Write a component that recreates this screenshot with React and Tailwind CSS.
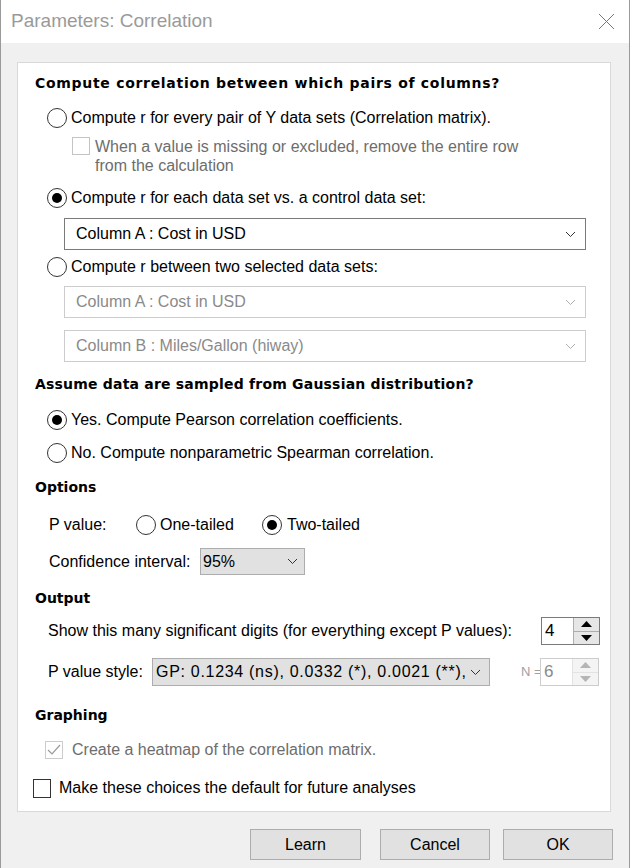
import React from 'react';

const Radio = ({ checked }) => (
  <span className="w-[20px] h-[20px] rounded-full border border-[#333] bg-white flex items-center justify-center shrink-0">
    {checked && <span className="w-[10px] h-[10px] rounded-full bg-[#000]" />}
  </span>
);

const Chevron = ({ color = '#333' }) => (
  <svg width="11" height="7" viewBox="0 0 11 7" className="shrink-0">
    <polyline points="1,1 5.5,5.5 10,1" fill="none" stroke={color} strokeWidth="1" />
  </svg>
);

const Tick = () => (
  <svg width="14" height="12" viewBox="0 0 14 12">
    <polyline points="1,6 5,10 13,1" fill="none" stroke="#9a9a9a" strokeWidth="1.2" />
  </svg>
);

const Triangle = ({ up, color }) => (
  <svg width="11" height="6" viewBox="0 0 11 6">
    <polygon points={up ? '0,6 11,6 5.5,0' : '0,0 11,0 5.5,6'} fill={color} />
  </svg>
);

const Spinner = ({ value, disabled }) => (
  <div
    className={`flex h-[28px] w-[59px] border ${disabled ? 'border-[#cccccc]' : 'border-[#7a7a7a]'} bg-white shrink-0`}
  >
    <div className={`flex-1 flex items-center pl-[3px] text-[17px] ${disabled ? 'text-[#8a8a8a]' : 'text-black'}`}>
      {value}
    </div>
    <div className={`w-[26px] flex flex-col border-l ${disabled ? 'border-[#e3e3e3]' : 'border-[#adadad]'}`}>
      <div className={`flex-1 flex items-center justify-center border-b ${disabled ? 'bg-[#f4f4f4] border-[#e3e3e3]' : 'bg-[#e6e6e6] border-[#adadad]'}`}>
        <Triangle up color={disabled ? '#b5b5b5' : '#000'} />
      </div>
      <div className={`flex-1 flex items-center justify-center ${disabled ? 'bg-[#f4f4f4]' : 'bg-[#e6e6e6]'}`}>
        <Triangle color={disabled ? '#b5b5b5' : '#000'} />
      </div>
    </div>
  </div>
);

const Heading = ({ children, className = '' }) => (
  <div
    className={`h-[24px] flex items-center pl-[17px] font-bold text-[14px] text-black whitespace-nowrap ${className}`}
    style={{ fontFamily: '"DejaVu Sans", Verdana, sans-serif' }}
  >
    {children}
  </div>
);

const RadioRow = ({ checked, children, className = '' }) => (
  <div className={`h-[24px] flex items-center pl-[29px] gap-[4px] ${className}`}>
    <Radio checked={checked} />
    <span>{children}</span>
  </div>
);

const Select = ({ children, disabled, className = '' }) => (
  <div
    className={`ml-[46px] w-[522px] h-[32px] flex items-center justify-between pl-[11px] pr-[9px] border bg-white ${
      disabled ? 'border-[#cccccc] text-[#8a8a8a]' : 'border-[#7a7a7a] text-black'
    } ${className}`}
  >
    <span>{children}</span>
    <Chevron color={disabled ? '#b0b0b0' : '#333'} />
  </div>
);

export default function App() {
  return (
    <div
      className="w-[630px] h-[868px] bg-[#f0f0f0] border-x border-[#9a9a9a] flex flex-col text-black text-[16px]"
      style={{ fontFamily: '"Liberation Sans", Arial, sans-serif' }}
    >
      {/* title bar */}
      <div className="h-[43px] bg-white flex items-center justify-between pl-[10px] pr-[14px] shrink-0">
        <span className="text-[19px] text-[#9a9a9a]">Parameters: Correlation</span>
        <svg width="17" height="17" viewBox="0 0 17 17">
          <path d="M1 1 L16 16 M16 1 L1 16" stroke="#777" strokeWidth="1" />
        </svg>
      </div>

      {/* main panel */}
      <div className="ml-[16px] mt-[19px] w-[594px] h-[750px] bg-white border border-[#d9d9d9] flex flex-col shrink-0">
        <Heading className="mt-[8px] tracking-[0.7px]">Compute correlation between which pairs of columns?</Heading>
        <RadioRow className="mt-[11px]">Compute r for every pair of Y data sets (Correlation matrix).</RadioRow>

        <div className="mt-[6px] pl-[54px] flex gap-[5px] text-[#6d6d6d]">
          <span className="mt-[1px] w-[18px] h-[18px] border border-[#c4c4c4] bg-white shrink-0" />
          <span className="leading-[19px] mt-[1px]">
            When a value is missing or excluded, remove the entire row
            <br />
            from the calculation
          </span>
        </div>

        <RadioRow checked className="mt-[11px]">Compute r for each data set vs. a control data set:</RadioRow>
        <Select className="mt-[8px]">Column A : Cost in USD</Select>
        <RadioRow className="mt-[5px]">Compute r between two selected data sets:</RadioRow>
        <Select disabled className="mt-[7px]">Column A : Cost in USD</Select>
        <Select disabled className="mt-[12px]">Column B : Miles/Gallon (hiway)</Select>

        <Heading className="mt-[10px] tracking-[0.2px]">Assume data are sampled from Gaussian distribution?</Heading>
        <RadioRow checked className="mt-[12px]">Yes. Compute Pearson correlation coefficients.</RadioRow>
        <RadioRow className="mt-[9px]">No. Compute nonparametric Spearman correlation.</RadioRow>

        <Heading className="mt-[10px]">Options</Heading>
        <div className="mt-[14px] h-[24px] flex items-center pl-[31px]">
          <span className="w-[87px]">P value:</span>
          <Radio />
          <span className="ml-[4px] w-[102px]">One-tailed</span>
          <Radio checked />
          <span className="ml-[5px]">Two-tailed</span>
        </div>
        <div className="mt-[11px] h-[27px] flex items-center pl-[31px]">
          <span className="w-[151px]">Confidence interval:</span>
          <div className="w-[105px] h-[27px] bg-[#e1e1e1] border border-[#adadad] flex items-center justify-between pl-[2px] pr-[6px]">
            <span>95%</span>
            <Chevron />
          </div>
        </div>

        <Heading className="mt-[11px]">Output</Heading>
        <div className="mt-[7px] h-[28px] flex items-center justify-between pl-[30px] pr-[10px]">
          <span>Show this many significant digits (for everything except P values):</span>
          <Spinner value="4" />
        </div>
        <div className="mt-[13px] h-[28px] flex items-center pl-[30px]">
          <span className="w-[104px]">P value style:</span>
          <div className="w-[338px] h-[28px] bg-[#e1e1e1] border border-[#adadad] flex items-center justify-between pl-[3px] pr-[8px]">
            <span className="tracking-[0.7px] whitespace-nowrap">GP: 0.1234 (ns), 0.0332 (*), 0.0021 (**),</span>
            <Chevron />
          </div>
          <span className="ml-[31px] w-[19px] text-[13px] whitespace-nowrap text-[#a0a0a0]">N =</span>
          <Spinner value="6" disabled />
        </div>

        <Heading className="mt-[17px]">Graphing</Heading>
        <div className="mt-[11px] h-[24px] flex items-center pl-[27px] gap-[9px] text-[#6d6d6d]">
          <span className="w-[18px] h-[18px] border border-[#cccccc] bg-white flex items-center justify-center">
            <Tick />
          </span>
          <span>Create a heatmap of the correlation matrix.</span>
        </div>
        <div className="mt-[14px] h-[24px] flex items-center pl-[15px] gap-[8px]">
          <span className="w-[18px] h-[19px] border border-[#333] bg-white" />
          <span>Make these choices the default for future analyses</span>
        </div>
      </div>

      {/* buttons */}
      <div className="mt-[17px] flex pl-[249px]">
        <button className="w-[111px] h-[31px] bg-[#e1e1e1] border border-[#adadad]">Learn</button>
        <button className="ml-[19px] w-[110px] h-[31px] bg-[#e1e1e1] border border-[#adadad]">Cancel</button>
        <button className="ml-[13px] w-[110px] h-[31px] bg-[#e1e1e1] border border-[#adadad]">OK</button>
      </div>
    </div>
  );
}
